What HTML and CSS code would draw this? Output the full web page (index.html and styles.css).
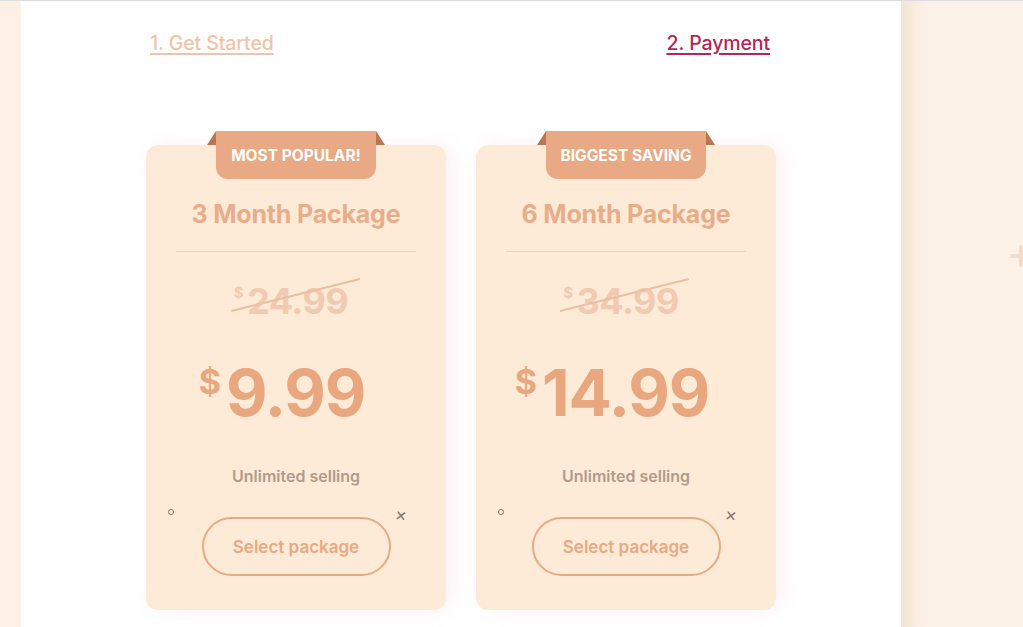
FILE: index.html
```html
<!DOCTYPE html>
<html lang="en">
<head>
<meta charset="utf-8">
<title>Choose a package</title>
<link rel="stylesheet" href="styles.css">
</head>
<body>
<div class="page">
  <div class="strip"></div>
  <main class="main">
    <div class="container">
      <nav class="steps">
        <a href="#" class="step step-done">1. Get Started</a>
        <a href="#" class="step step-active">2. Payment</a>
      </nav>
      <div class="cards">
        <div class="card">
          <div class="ribbon">MOST POPULAR!</div>
          <h2 class="title">3 Month Package</h2>
          <hr class="divider">
          <div class="old-price"><span class="cur">$</span>24.99</div>
          <div class="price"><span class="cur">$</span>9.99</div>
          <p class="feature">Unlimited selling</p>
          <button class="select">Select package</button>
          <span class="deco-circle"></span>
          <span class="deco-x">×</span>
        </div>
        <div class="card">
          <div class="ribbon">BIGGEST SAVING</div>
          <h2 class="title">6 Month Package</h2>
          <hr class="divider">
          <div class="old-price"><span class="cur">$</span>34.99</div>
          <div class="price"><span class="cur">$</span>14.99</div>
          <p class="feature">Unlimited selling</p>
          <button class="select">Select package</button>
          <span class="deco-circle"></span>
          <span class="deco-x">×</span>
        </div>
      </div>
    </div>
  </main>
  <aside class="side">
    <span class="side-plus"></span>
  </aside>
</div>
</body>
</html>
```
FILE: styles.css
```css
* { box-sizing: border-box; }
html, body { margin: 0; padding: 0; }
body {
  font-family: "Inter", "Noto Sans", "Liberation Sans", sans-serif;
  background: #ffffff;
  overflow: hidden;
}
.page {
  display: flex;
  height: 627px;
  border-top: 1px solid #dcdcdc;
}
.strip {
  flex: 0 0 21px;
  background: #fdf1e6;
}
.main {
  flex: 0 0 880px;
  background: #ffffff;
}
.side {
  flex: 1;
  background: #fdf2e7;
  box-shadow: inset 22px 0 18px -14px rgba(225, 205, 180, 0.45);
  position: relative;
}
.side-plus {
  position: absolute;
  left: 109px;
  top: 244px;
  width: 22px;
  height: 22px;
}
.side-plus::before,
.side-plus::after {
  content: "";
  position: absolute;
  background: #f5dcc7;
  border-radius: 2px;
}
.side-plus::before {
  left: 0;
  top: 9px;
  width: 22px;
  height: 4px;
}
.side-plus::after {
  left: 9px;
  top: 0;
  width: 4px;
  height: 22px;
}
.container {
  width: 630px;
  margin: 0 auto;
  padding-top: 30px;
}
.steps {
  display: flex;
  justify-content: space-between;
  padding: 0 6px 0 4px;
  line-height: 24px;
}
.step {
  font-size: 19.5px;
  font-weight: 500;
  letter-spacing: -0.1px;
  text-decoration: underline;
  text-underline-offset: 3px;
  text-decoration-thickness: 2px;
}
.step-done { color: #f1c4a7; }
.step-active { color: #b62459; }

.cards {
  display: flex;
  gap: 30px;
  margin-top: 90px;
}
.card {
  position: relative;
  width: 300px;
  height: 465px;
  background: #fdebd7;
  border-radius: 12px;
  box-shadow: 6px 0 22px rgba(245, 205, 220, 0.28);
  display: flex;
  flex-direction: column;
  align-items: center;
  padding-top: 54px;
}
.ribbon {
  position: absolute;
  top: -14px;
  left: 70px;
  width: 160px;
  height: 48px;
  background: #e8a984;
  border-radius: 0 0 12px 12px;
  color: #ffffff;
  font-size: 15.5px;
  font-weight: 700;
  letter-spacing: 0;
  display: flex;
  align-items: center;
  justify-content: center;
}
.ribbon::before,
.ribbon::after {
  content: "";
  position: absolute;
  top: 0;
  width: 0;
  height: 0;
  border-bottom: 14px solid #b87752;
}
.ribbon::before {
  left: -9px;
  border-left: 9px solid transparent;
}
.ribbon::after {
  right: -9px;
  border-right: 9px solid transparent;
}
.title {
  margin: 0;
  font-size: 25px;
  line-height: 30px;
  font-weight: 700;
  letter-spacing: -0.2px;
  color: #e9ad89;
}
.divider {
  width: 240px;
  margin: 22px 0 0;
  border: 0;
  border-top: 1px solid #ead2bf;
}
.old-price {
  position: relative;
  margin-top: 19px;
  padding-right: 10px;
  font-size: 36px;
  line-height: 44px;
  font-weight: 700;
  letter-spacing: -0.5px;
  color: #f1cab1;
}
.old-price .cur {
  font-size: 15px;
  vertical-align: 16px;
  margin-right: 4px;
}
.old-price::after {
  content: "";
  position: absolute;
  left: -5px;
  top: 23px;
  width: 133px;
  height: 2px;
  background: #ecbfa4;
  transform: rotate(-14deg);
}
.price {
  margin-top: 21px;
  padding-right: 28px;
  font-size: 64px;
  line-height: 76px;
  font-weight: 700;
  letter-spacing: -1px;
  color: #e8a77f;
}
.price .cur {
  font-size: 34px;
  vertical-align: 22px;
  margin-right: 6px;
}
.feature {
  margin: 35px 0 0;
  font-size: 16px;
  line-height: 20px;
  font-weight: 600;
  color: #b39a8b;
}
.select {
  margin-top: 31px;
  width: 189px;
  height: 59px;
  border: 2px solid #e8aa85;
  border-radius: 30px;
  background: transparent;
  font-family: inherit;
  font-size: 17px;
  font-weight: 600;
  color: #e8a983;
  cursor: pointer;
}
.deco-circle {
  position: absolute;
  left: 22px;
  top: 364px;
  width: 6px;
  height: 6px;
  border: 1px solid #8a7468;
  border-radius: 50%;
}
.deco-x {
  position: absolute;
  left: 249px;
  top: 360px;
  font-size: 18px;
  line-height: 20px;
  color: #8a7468;
  transform: rotate(8deg);
}
```
